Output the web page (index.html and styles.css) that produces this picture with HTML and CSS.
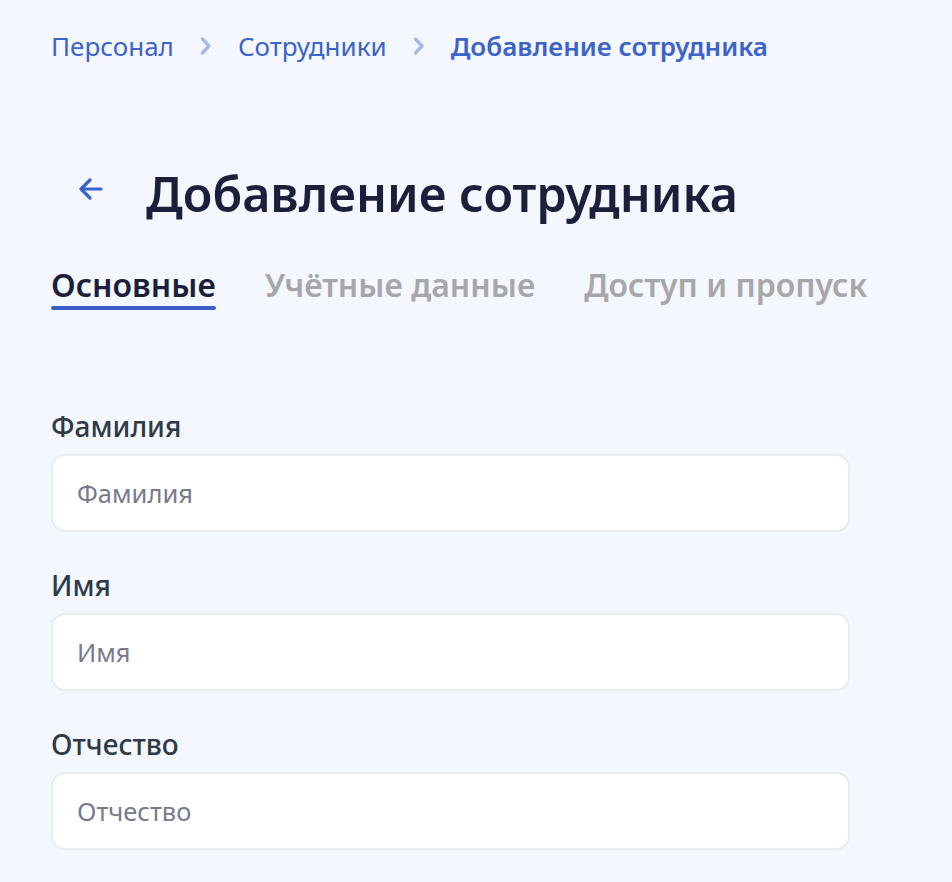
FILE: index.html
```html
<!DOCTYPE html>
<html lang="ru">
<head>
<meta charset="utf-8">
<link rel="stylesheet" href="styles.css">
</head>
<body>
<div class="page">
  <nav class="crumbs">
    <a class="crumb">Персонал</a>
    <svg class="chev" width="12" height="20" viewBox="0 0 12 20"><path d="M2.5 3 L9 10 L2.5 17" fill="none" stroke="#a9b9e6" stroke-width="3.4" stroke-linecap="round" stroke-linejoin="round"/></svg>
    <a class="crumb">Сотрудники</a>
    <svg class="chev" width="12" height="20" viewBox="0 0 12 20"><path d="M2.5 3 L9 10 L2.5 17" fill="none" stroke="#a9b9e6" stroke-width="3.4" stroke-linecap="round" stroke-linejoin="round"/></svg>
    <span class="crumb current">Добавление сотрудника</span>
  </nav>

  <header class="head">
    <svg class="back" width="24" height="22" viewBox="0 0 24 22"><path d="M22 11 H3 M11 2 L2 11 L11 20" fill="none" stroke="#3c63c9" stroke-width="3.2" stroke-linecap="round" stroke-linejoin="round"/></svg>
    <h1 class="title">Добавление сотрудника</h1>
  </header>

  <div class="tabs">
    <div class="tab active">Основные</div>
    <div class="tab">Учётные данные</div>
    <div class="tab">Доступ и пропуск</div>
  </div>

  <form class="form">
    <label class="field">
      <span class="label">Фамилия</span>
      <input class="input" type="text" placeholder="Фамилия">
    </label>
    <label class="field">
      <span class="label">Имя</span>
      <input class="input" type="text" placeholder="Имя">
    </label>
    <label class="field">
      <span class="label">Отчество</span>
      <input class="input" type="text" placeholder="Отчество">
    </label>
  </form>
</div>
</body>
</html>
```

FILE: styles.css
```css
html, body {
  margin: 0;
  padding: 0;
  background: #f4f7fe;
}
body {
  font-family: "Noto Sans", "Open Sans", sans-serif;
  color: #1c1f3a;
}
.page {
  padding: 28px 0 0 51px;
}
.crumbs {
  display: flex;
  align-items: center;
  gap: 26px;
  height: 36px;
  font-size: 26px;
  line-height: 36px;
  color: #3c63c9;
}
.crumb {
  text-decoration: none;
  color: #3c63c9;
}
.crumb.current {
  font-weight: 600;
}
.chev {
  display: block;
}
.head {
  display: flex;
  align-items: flex-start;
  gap: 43px;
  margin-top: 99px;
  padding-left: 28px;
}
.back {
  display: block;
  margin-top: 15px;
}
.title {
  margin: 0;
  font-size: 48.5px;
  font-weight: 600;
  line-height: 60px;
  color: #1c1f3a;
}
.tabs {
  display: flex;
  gap: 49px;
  margin-top: 42px;
}
.tab {
  font-size: 32px;
  font-weight: 600;
  color: #a7a7a9;
  line-height: 40px;
  padding-bottom: 5px;
  position: relative;
}
.tab.active {
  color: #1c1f3a;
}
.tab.active::after {
  content: "";
  position: absolute;
  left: 0;
  right: 0;
  bottom: 0;
  height: 4px;
  border-radius: 2px;
  background: #3a5fc8;
}
.form {
  display: flex;
  flex-direction: column;
  gap: 36px;
  margin-top: 99px;
  width: 799px;
}
.field {
  display: flex;
  flex-direction: column;
  gap: 11px;
}
.label {
  font-size: 28px;
  font-weight: 500;
  color: #2e3a47;
  line-height: 34px;
}
.input {
  box-sizing: border-box;
  height: 78px;
  width: 100%;
  border: 2px solid #e9ecf1;
  border-radius: 14px;
  background: #fff;
  padding: 0 24px;
  font-family: "Noto Sans", "Open Sans", sans-serif;
  font-size: 25.5px;
  color: #1c1f3a;
  outline: none;
}
.input::placeholder {
  color: #787a8a;
}
```
